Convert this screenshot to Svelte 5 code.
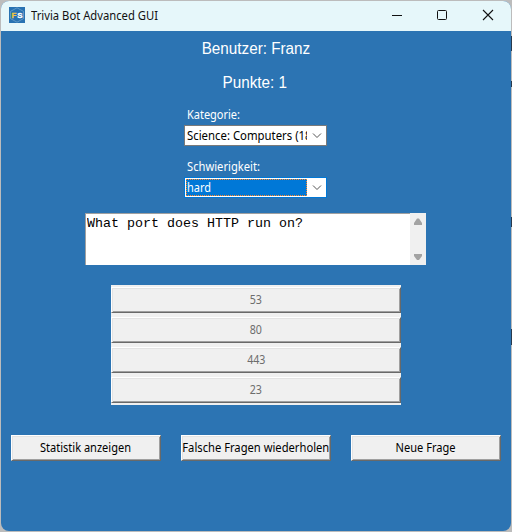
<script>
  const answers = ['53', '80', '443', '23'];
  const actions = [
    { label: 'Statistik anzeigen', width: 91 },
    { label: 'Falsche Fragen wiederholen', width: 147 },
    { label: 'Neue Frage', width: 60 }
  ];

  // Condenses or widens a label so that it fills the given width.
  function fit(node, width) {
    const apply = () => {
      node.style.transform = 'none';
      const natural = node.getBoundingClientRect().width;
      node.style.transform = `scaleX(${width / natural})`;
    };
    apply();
    document.fonts?.ready.then(apply);
  }
</script>

<div class="desktop">
  <main class="window">
    <header>
      <svg class="logo" width="16" height="16" viewBox="0 0 16 16">
        <rect width="16" height="16" fill="#2872b2" />
        <path d="M8 .8 14.5 4.4v7.2L8 15.2 1.5 11.6V4.4Z" fill="none" stroke="#79a9ce" stroke-width=".7" />
        <text x="2.6" y="11" fill="#f0c840" stroke="#f0c840">F</text>
        <text x="8.2" y="11" fill="#fff" stroke="#fff">S</text>
      </svg>
      <span class="title"><span class="left" use:fit={127}>Trivia Bot Advanced GUI</span></span>
      <svg class="controls" width="130" height="30" viewBox="0 0 130 30" fill="none" stroke="#111">
        <path d="M11 14.5h10" />
        <rect x="56.5" y="9.5" width="9" height="9" rx="1" />
        <path d="m102 9 10 10M112 9l-10 10" stroke-width="1.1" />
      </svg>
    </header>

    <section class="body">
      <div class="stat user"><span use:fit={108.5}>Benutzer: Franz</span></div>
      <div class="stat points"><span use:fit={64.5}>Punkte: 1</span></div>

      <div class="field">
        <div class="label"><span class="left" use:fit={53}>Kategorie:</span></div>
        <div class="combo">
          <div class="value"><span class="left" use:fit={128}>Science: Computers (18)</span></div>
          <svg width="18" height="19" viewBox="0 0 18 19"><path d="m5 7.5 4 4 4-4" fill="none" stroke="#555" /></svg>
        </div>
      </div>
      <div class="field second">
        <div class="label"><span class="left" use:fit={73}>Schwierigkeit:</span></div>
        <div class="combo active">
          <div class="value"><span class="left" use:fit={24}>hard</span></div>
          <svg width="18" height="19" viewBox="0 0 18 19"><path d="m5 7.5 4 4 4-4" fill="none" stroke="#555" /></svg>
        </div>
      </div>

      <div class="question">
        <div class="text"><span class="left" use:fit={216}>What port does HTTP run on?</span></div>
        <svg width="16" height="52" viewBox="0 0 16 52" fill="#a3a3a3">
          <path d="M7 5.5h2l3 4.5v2H4v-2ZM4 41h8v2l-3 4H7l-3-4Z" />
        </svg>
      </div>

      <div class="answers">
        {#each answers as answer}
          <button class="raised" disabled><span use:fit={answer.length * 6.1}>{answer}</span></button>
        {/each}
      </div>

      <footer>
        {#each actions as action}
          <button class="raised"><span use:fit={action.width}>{action.label}</span></button>
        {/each}
      </footer>
    </section>
  </main>
</div>

<style>
  .desktop {
    box-sizing: border-box;
    width: 512px;
    height: 532px;
    padding: 1px;
    background:
      linear-gradient(#2a3a4c, #2a3a4c) 511px 36px / 1px 15px no-repeat,
      linear-gradient(#2a3a4c, #2a3a4c) 511px 81px / 1px 6px no-repeat,
      linear-gradient(#2a3a4c, #2a3a4c) 511px 217px / 1px 10px no-repeat,
      linear-gradient(#2a3a4c, #2a3a4c) 511px 329px / 1px 16px no-repeat,
      #bcbcbc;
    font: 12px/16px 'Noto Sans', 'Open Sans', sans-serif;
    overflow: hidden;
  }
  .window {
    display: flex;
    flex-direction: column;
    height: 530px;
    border-radius: 8px;
    overflow: hidden;
    background: #2c74b3;
  }
  span {
    white-space: pre;
    display: inline-block;
  }
  .left {
    transform-origin: left;
  }
  header {
    display: flex;
    height: 30px;
    background: #e6f7fa;
    color: #111;
  }
  .logo {
    margin: 6px 6px 0 8px;
  }
  .logo text {
    font: bold 8px 'Liberation Sans', sans-serif;
    stroke-width: 0.3;
  }
  .title {
    flex: 1;
    padding-top: 7px;
  }
  .body {
    display: flex;
    flex-direction: column;
    align-items: center;
  }
  .stat {
    height: 20px;
    color: #fff;
    font: 16px/20px 'Liberation Sans', Arial, sans-serif;
  }
  .user {
    margin-top: 8px;
  }
  .points {
    margin: 14px 2px 0 0;
  }
  .field {
    width: 143px;
    margin: 14px 2px 0 0;
  }
  .field.second {
    margin-top: 13px;
  }
  .label {
    height: 18px;
    padding-left: 3px;
    color: #fff;
  }
  .combo {
    box-sizing: border-box;
    display: flex;
    height: 21px;
    border: 1px solid #7a7a7a;
    background: #fff;
  }
  .combo.active {
    border-color: #0078d7;
  }
  .value {
    flex: 1;
    min-width: 0;
    overflow: hidden;
    margin: 1px 1px 1px 0;
    padding-left: 2px;
    line-height: 17px;
    color: #000;
  }
  .active .value {
    box-sizing: border-box;
    margin-left: 1px;
    padding-left: 0;
    border: 1px dotted #ff8728;
    background: #0078d7;
    color: #fff;
    line-height: 15px;
  }
  .question {
    box-sizing: border-box;
    display: flex;
    width: 341px;
    height: 52px;
    margin: 15px 2px 0 0;
    background: #fff;
  }
  .text {
    flex: 1;
    padding: 2px 0 0 1px;
    border-top: 1px solid #a0a0a0;
    border-left: 1px solid #a0a0a0;
    color: #000;
    font: 13.33px/15px 'Liberation Mono', 'Courier New', monospace;
  }
  .question svg {
    background: #f0f0f0;
  }
  .answers {
    display: flex;
    flex-direction: column;
    gap: 4px;
    width: 290px;
    margin-top: 20px;
    padding: 2px 0;
    background: #f0f0f0;
  }
  .raised {
    box-sizing: border-box;
    display: flex;
    align-items: center;
    justify-content: center;
    height: 26px;
    padding: 0;
    border: 1px solid;
    border-color: #fff #696969 #696969 #fff;
    box-shadow: inset 1px 1px #e3e3e3, inset -1px -1px #a0a0a0;
    background: #f0f0f0;
    color: #000;
    font: inherit;
  }
  .raised:disabled {
    color: #6d6d6d;
  }
  footer {
    display: flex;
    gap: 20px;
    margin-top: 30px;
  }
  footer .raised {
    width: 150px;
  }
</style>
